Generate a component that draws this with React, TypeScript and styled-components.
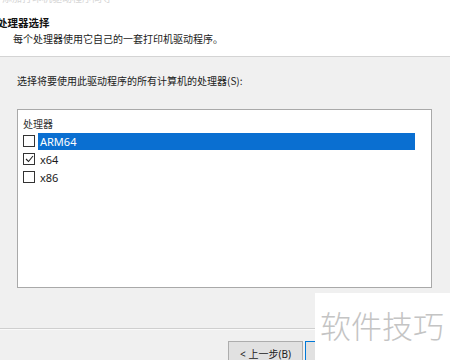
import React, { useState } from 'react';
import styled, { createGlobalStyle } from 'styled-components';

const GlobalStyle = createGlobalStyle`
  html, body {
    margin: 0;
    padding: 0;
    background: #f0f0f0;
  }
  body {
    font-family: "Noto Sans", "Noto Sans CJK SC", sans-serif;
  }
`;

const Window = styled.div`
  width: 450px;
  height: 360px;
  overflow: hidden;
  position: relative;
  background: #f0f0f0;
  display: flex;
  flex-direction: column;
`;

const Header = styled.div`
  height: 56px;
  background: #ffffff;
  border-bottom: 1px solid #d4d4d4;
  display: flex;
  flex-direction: column;
  flex-shrink: 0;
`;

const CutLine = styled.div`
  height: 3px;
  overflow: hidden;
  display: flex;
  align-items: flex-end;
  color: #d6d6d6;
  font-size: 10px;
  line-height: 10px;
  padding-left: 2px;
`;

const Title = styled.div`
  margin: 13px 0 0 -3px;
  font-size: 10.5px;
  line-height: 14px;
  font-weight: 700;
  color: #111;
  font-family: "Noto Sans CJK SC", sans-serif;
`;

const Subtitle = styled.div`
  margin: 2px 0 0 13px;
  font-size: 10px;
  line-height: 14px;
  color: #222;
  font-family: "Noto Sans CJK SC", sans-serif;
`;

const Body = styled.div`
  padding: 17px 18px 0 17px;
  display: flex;
  flex-direction: column;
  height: 254px;
  border-bottom: 1px solid #cfcfcf;
  box-shadow: 0 1px 0 #fafafa;
  flex-shrink: 0;
`;

const Prompt = styled.div`
  font-size: 10px;
  line-height: 14px;
  color: #222;
  font-family: "Noto Sans CJK SC", sans-serif;
`;

const ListBox = styled.div`
  margin-top: 21px;
  height: 173px;
  background: #ffffff;
  border: 1px solid #a9a9a9;
  padding: 4px 16px 0 5px;
  display: flex;
  flex-direction: column;
`;

const ColumnHead = styled.div`
  height: 18px;
  display: flex;
  align-items: center;
  font-size: 10px;
  color: #333;
  font-family: "Noto Sans CJK SC", sans-serif;
`;

const Row = styled.div`
  height: 18px;
  display: flex;
  align-items: center;
  gap: 3px;
`;

const Box = styled.span<{ $checked: boolean }>`
  width: 10px;
  height: 10px;
  border: 1px solid #333;
  background: #fff;
  display: flex;
  align-items: center;
  justify-content: center;
  flex-shrink: 0;
`;

const Label = styled.span<{ $selected: boolean }>`
  flex: 1;
  height: 17px;
  display: flex;
  align-items: center;
  padding-left: 2px;
  font-size: 11px;
  color: ${(p) => (p.$selected ? '#ffffff' : '#1a1a1a')};
  background: ${(p) => (p.$selected ? '#0a6fd1' : 'transparent')};
`;

const Footer = styled.div`
  display: flex;
  padding: 12px 0 0 228px;
  gap: 2px;
`;

const Button = styled.button<{ $default?: boolean }>`
  width: 75px;
  height: 24px;
  padding: 0;
  flex-shrink: 0;
  background: #e1e1e1;
  border: 1px solid ${(p) => (p.$default ? '#0078d7' : '#adadad')};
  font-size: 10px;
  color: #222;
  font-family: "Noto Sans", "Noto Sans CJK SC", sans-serif;
`;

const Watermark = styled.div`
  position: absolute;
  left: 315px;
  top: 293px;
  right: 0;
  bottom: 0;
  background: #ffffff;
  color: #c4c4c4;
  font-size: 31px;
  font-weight: 300;
  white-space: nowrap;
  padding: 14px 0 0 5px;
  font-family: "Noto Sans CJK SC", sans-serif;
  line-height: 36px;
`;

const items = ['ARM64', 'x64', 'x86'];

export default function App() {
  const [checked, setChecked] = useState<Record<string, boolean>>({ x64: true });
  const selected = 'ARM64';

  return (
    <Window>
      <GlobalStyle />
      <Header>
        <CutLine>添加打印机驱动程序向导</CutLine>
        <Title>处理器选择</Title>
        <Subtitle>每个处理器使用它自己的一套打印机驱动程序。</Subtitle>
      </Header>
      <Body>
        <Prompt>选择将要使用此驱动程序的所有计算机的处理器(S):</Prompt>
        <ListBox>
          <ColumnHead>处理器</ColumnHead>
          {items.map((it) => (
            <Row key={it} onClick={() => setChecked({ ...checked, [it]: !checked[it] })}>
              <Box $checked={!!checked[it]}>
                {checked[it] && (
                  <svg width="9" height="8" viewBox="0 0 9 8">
                    <path d="M1 4 L3.5 6.5 L8 1" fill="none" stroke="#222" strokeWidth="1.1" />
                  </svg>
                )}
              </Box>
              <Label $selected={it === selected}>{it}</Label>
            </Row>
          ))}
        </ListBox>
      </Body>
      <Footer>
        <Button>&lt; 上一步(B)</Button>
        <Button $default>下一步(N) &gt;</Button>
        <Button>取消</Button>
      </Footer>
      <Watermark>软件技巧</Watermark>
    </Window>
  );
}
